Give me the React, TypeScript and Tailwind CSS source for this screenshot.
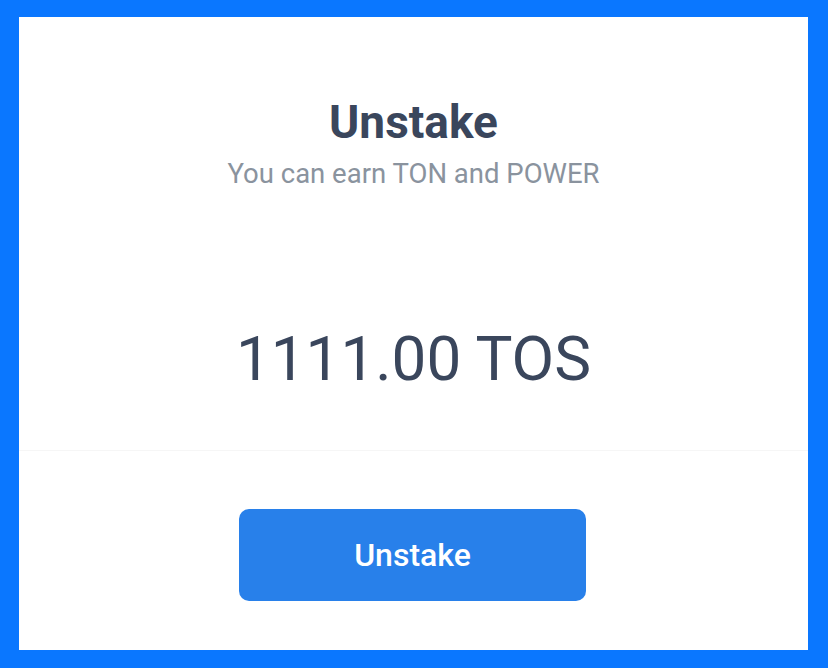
import React from 'react';

const App: React.FC = () => {
  return (
    <div className="w-[828px] h-[668px] bg-[#0a77ff] pt-[17px] pl-[19px] pr-[20px] pb-[18px] font-['Roboto',sans-serif]">
      <div className="h-full bg-white flex flex-col">
        <div className="flex flex-col items-center pt-[79px]">
          <h1 className="text-[46px] leading-[52px] font-bold text-[#3a465c]">Unstake</h1>
          <p className="text-[27.5px] leading-[32px] text-[#8a939e] mt-[10px]">You can earn TON and POWER</p>
        </div>
        <div className="flex justify-center pt-[129px] pb-[51px]">
          <span className="text-[62px] leading-[80px] text-[#3a465c]">1111.00 TOS</span>
        </div>
        <div className="border-t border-[#f6f6f6] flex-1 flex justify-center pt-[58px] pr-[2px]">
          <button className="w-[347px] h-[92px] rounded-[10px] bg-[#2880ea] text-white text-[32px] font-medium">
            Unstake
          </button>
        </div>
      </div>
    </div>
  );
};

export default App;
